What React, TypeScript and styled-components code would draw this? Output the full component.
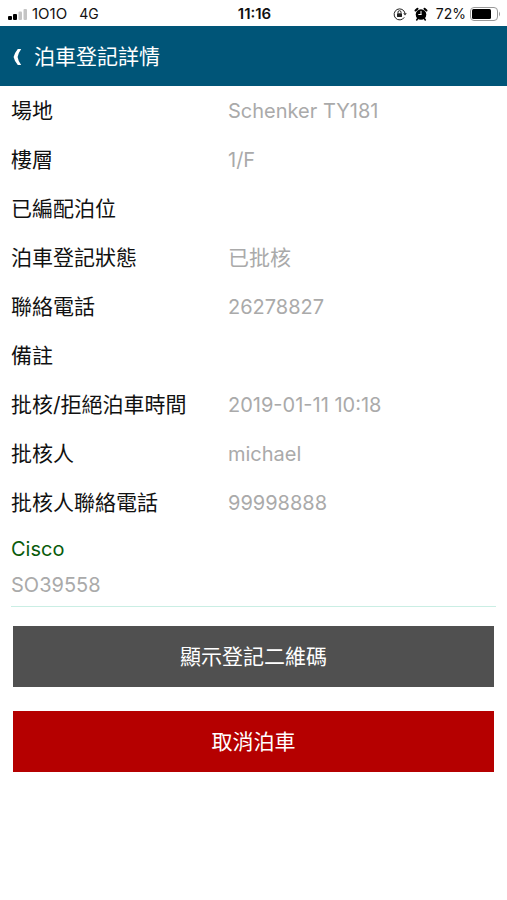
import React from 'react';
import styled, { createGlobalStyle } from 'styled-components';

const GlobalStyle = createGlobalStyle`
  * { box-sizing: border-box; }
  body {
    margin: 0;
    background: #fff;
    font-family: Inter, "Noto Sans CJK TC", sans-serif;
    color: #111;
  }
`;

const StatusBar = styled.div`
  display: grid;
  grid-template-columns: 1fr auto 1fr;
  align-items: center;
  height: 26px;
  padding: 2px 6px 0 8px;
  font-size: 14px;
  line-height: 20px;
`;

const StatusGroup = styled.div<{ $end?: boolean }>`
  display: flex;
  align-items: center;
  gap: 4px;
  justify-content: ${(p) => (p.$end ? 'flex-end' : 'flex-start')};
`;

const Carrier = styled.span`
  margin-right: 8px;
  font-size: 15px;
`;

const Clock = styled.time`
  font-size: 15px;
  font-weight: 600;
`;

const StatusIcons = styled.span`
  display: flex;
  gap: 7px;
  margin-right: 4px;
`;

const Header = styled.header`
  display: flex;
  align-items: center;
  gap: 12px;
  height: 60px;
  padding: 2px 12px 0;
  background: #005578;
  color: #fff;
`;

const BackButton = styled.button`
  display: flex;
  padding: 0;
  border: 0;
  background: none;
  color: inherit;
`;

const Title = styled.h1`
  margin: 0;
  font-size: 21px;
  font-weight: 400;
  line-height: 30px;
`;

const Content = styled.main`
  padding: 0 11px;
`;

const Details = styled.dl`
  margin: 0;
`;

const Row = styled.div`
  display: grid;
  grid-template-columns: 217px 1fr;
  align-items: center;
  height: 49px;
  font-size: 21px;
  line-height: 30px;
`;

const Label = styled.dt``;

const Value = styled.dd`
  margin: 0;
  color: #aaa;
  font-size: 20px;

  &:lang(zh) {
    font-size: 21px;
  }
`;

const Order = styled.section`
  padding: 4px 0 3px;
  border-bottom: 1px solid #caeee4;
  font-size: 20px;
  line-height: 36px;
`;

const Company = styled.h2`
  margin: 0;
  color: #095b0b;
  font-size: inherit;
  font-weight: 400;
`;

const OrderNumber = styled.p`
  margin: 0;
  color: #aaa;
`;

const Actions = styled.div`
  display: flex;
  flex-direction: column;
  gap: 24px;
  padding: 19px 2px;
`;

const ActionButton = styled.button<{ $danger?: boolean }>`
  height: 61px;
  padding: 0 0 3px;
  border: 0;
  background: ${(p) => (p.$danger ? '#b50000' : '#505050')};
  color: #fff;
  font-family: inherit;
  font-size: 21px;
`;

type Detail = { label: string; value?: string; lang?: string };

const rows: Detail[] = [
  { label: '場地', value: 'Schenker TY181' },
  { label: '樓層', value: '1/F' },
  { label: '已編配泊位' },
  { label: '泊車登記狀態', value: '已批核', lang: 'zh' },
  { label: '聯絡電話', value: '26278827' },
  { label: '備註' },
  { label: '批核/拒絕泊車時間', value: '2019-01-11 10:18' },
  { label: '批核人', value: 'michael' },
  { label: '批核人聯絡電話', value: '99998888' },
];

const SignalIcon = () => (
  <svg width="20" height="13" viewBox="0 0 20 13" aria-hidden="true">
    <rect x="0" y="8" width="4" height="4" rx="1" fill="#000" />
    <rect x="5" y="6" width="4" height="6" rx="1" fill="#000" />
    <rect x="10.500" y="3.500" width="3.500" height="8.500" rx="1" fill="#c4c4c4" />
    <rect x="15.500" y="1" width="3.500" height="11" rx="1" fill="#c4c4c4" />
  </svg>
);

const LockIcon = () => (
  <svg width="14" height="14" viewBox="0 0 14 14" fill="none" stroke="#222" aria-hidden="true">
    <path d="M11.3 10.300A5.500 5.500 0 1 1 12 6.200" />
    <path d="M10.200 6.200h3.600L12 8.600z" fill="#222" stroke="none" />
    <rect x="4" y="6.300" width="5" height="3.600" rx=".4" fill="#222" stroke="none" />
    <path d="M5 6.300V5.200a1.500 1.500 0 0 1 3 0v1.100" />
  </svg>
);

const AlarmIcon = () => (
  <svg width="14" height="14" viewBox="0 0 14 14" fill="none" stroke="#000" strokeLinecap="round" aria-hidden="true">
    <circle cx="7" cy="7.500" r="5.300" fill="#000" stroke="none" />
    <path d="M1.500 3.500 3.500 1.700M12.500 3.500l-2-1.800" strokeWidth="2" />
    <path d="M3.700 11.500 2.700 13M10.300 11.500l1 1.500" strokeWidth="1.500" />
    <path d="M7 7.500V4.300M7 7.500H4.700" stroke="#fff" />
  </svg>
);

const BatteryIcon = () => (
  <svg width="31" height="14" viewBox="0 0 31 14" aria-hidden="true">
    <rect x=".5" y=".5" width="27" height="13" rx="3.500" fill="none" stroke="#999" />
    <rect x="2" y="2" width="19" height="10" rx="1.500" fill="#000" />
    <path d="M29 4.500q2 2.500 0 5z" fill="#999" />
  </svg>
);

export default function App() {
  return (
    <>
      <GlobalStyle />
      <StatusBar>
        <StatusGroup>
          <SignalIcon />
          <Carrier>1O1O</Carrier>
          <span>4G</span>
        </StatusGroup>
        <Clock>11:16</Clock>
        <StatusGroup $end>
          <StatusIcons>
            <LockIcon />
            <AlarmIcon />
          </StatusIcons>
          <span>72%</span>
          <BatteryIcon />
        </StatusGroup>
      </StatusBar>
      <Header>
        <BackButton type="button" aria-label="返回">
          <svg width="10" height="18" viewBox="0 0 10 18" fill="currentColor">
            <path d="M5.800 1H9.200Q6 5.500 5.600 9 6 12.500 9.200 17H5.800Q2.200 12.500 1.600 9 2.200 5.500 5.800 1z" />
          </svg>
        </BackButton>
        <Title>泊車登記詳情</Title>
      </Header>
      <Content>
        <Details>
          {rows.map(({ label, value, lang }) => (
            <Row key={label}>
              <Label>{label}</Label>
              <Value lang={lang}>{value}</Value>
            </Row>
          ))}
        </Details>
        <Order>
          <Company>Cisco</Company>
          <OrderNumber>SO39558</OrderNumber>
        </Order>
        <Actions>
          <ActionButton type="button">顯示登記二維碼</ActionButton>
          <ActionButton type="button" $danger>取消泊車</ActionButton>
        </Actions>
      </Content>
    </>
  );
}
